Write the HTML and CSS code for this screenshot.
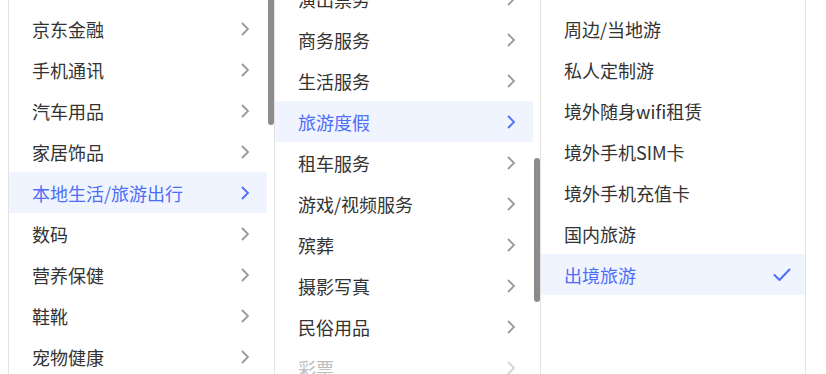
FILE: index.html
```html
<!DOCTYPE html>
<html lang="zh-CN">
<head>
    <meta charset="UTF-8">
    <title>类目选择</title>
    <link rel="stylesheet" href="styles.css">
</head>
<body>
    <!-- 三级类目级联面板 -->
    <div class="cascader">
        <!-- 一级类目 -->
        <div class="column">
            <ul class="menu">
                <li class="item"><span>京东金融</span><svg class="arrow" viewBox="0 0 16 16"><path d="M5 2 L11 8 L5 14"/></svg></li>
                <li class="item"><span>手机通讯</span><svg class="arrow" viewBox="0 0 16 16"><path d="M5 2 L11 8 L5 14"/></svg></li>
                <li class="item"><span>汽车用品</span><svg class="arrow" viewBox="0 0 16 16"><path d="M5 2 L11 8 L5 14"/></svg></li>
                <li class="item"><span>家居饰品</span><svg class="arrow" viewBox="0 0 16 16"><path d="M5 2 L11 8 L5 14"/></svg></li>
                <li class="item active"><span>本地生活/旅游出行</span><svg class="arrow" viewBox="0 0 16 16"><path d="M5 2 L11 8 L5 14"/></svg></li>
                <li class="item"><span>数码</span><svg class="arrow" viewBox="0 0 16 16"><path d="M5 2 L11 8 L5 14"/></svg></li>
                <li class="item"><span>营养保健</span><svg class="arrow" viewBox="0 0 16 16"><path d="M5 2 L11 8 L5 14"/></svg></li>
                <li class="item"><span>鞋靴</span><svg class="arrow" viewBox="0 0 16 16"><path d="M5 2 L11 8 L5 14"/></svg></li>
                <li class="item"><span>宠物健康</span><svg class="arrow" viewBox="0 0 16 16"><path d="M5 2 L11 8 L5 14"/></svg></li>
            </ul>
            <div class="thumb thumb-first"></div>
        </div>

        <!-- 二级类目 -->
        <div class="column">
            <ul class="menu scrolled">
                <li class="item"><span>演出票务</span><svg class="arrow" viewBox="0 0 16 16"><path d="M5 2 L11 8 L5 14"/></svg></li>
                <li class="item"><span>商务服务</span><svg class="arrow" viewBox="0 0 16 16"><path d="M5 2 L11 8 L5 14"/></svg></li>
                <li class="item"><span>生活服务</span><svg class="arrow" viewBox="0 0 16 16"><path d="M5 2 L11 8 L5 14"/></svg></li>
                <li class="item active"><span>旅游度假</span><svg class="arrow" viewBox="0 0 16 16"><path d="M5 2 L11 8 L5 14"/></svg></li>
                <li class="item"><span>租车服务</span><svg class="arrow" viewBox="0 0 16 16"><path d="M5 2 L11 8 L5 14"/></svg></li>
                <li class="item"><span>游戏/视频服务</span><svg class="arrow" viewBox="0 0 16 16"><path d="M5 2 L11 8 L5 14"/></svg></li>
                <li class="item"><span>殡葬</span><svg class="arrow" viewBox="0 0 16 16"><path d="M5 2 L11 8 L5 14"/></svg></li>
                <li class="item"><span>摄影写真</span><svg class="arrow" viewBox="0 0 16 16"><path d="M5 2 L11 8 L5 14"/></svg></li>
                <li class="item"><span>民俗用品</span><svg class="arrow" viewBox="0 0 16 16"><path d="M5 2 L11 8 L5 14"/></svg></li>
                <li class="item disabled"><span>彩票</span><svg class="arrow" viewBox="0 0 16 16"><path d="M5 2 L11 8 L5 14"/></svg></li>
            </ul>
            <div class="thumb thumb-second"></div>
        </div>

        <!-- 三级类目 -->
        <div class="column">
            <ul class="menu full">
                <li class="item"><span>周边/当地游</span></li>
                <li class="item"><span>私人定制游</span></li>
                <li class="item"><span>境外随身wifi租赁</span></li>
                <li class="item"><span>境外手机SIM卡</span></li>
                <li class="item"><span>境外手机充值卡</span></li>
                <li class="item"><span>国内旅游</span></li>
                <li class="item active"><span>出境旅游</span><svg class="check" viewBox="0 0 18 14"><path d="M1.5 7 L6.5 12 L16.5 1.5"/></svg></li>
            </ul>
        </div>
    </div>
</body>
</html>
```

FILE: styles.css
```css
/* Basic reset */
body, ul {
    margin: 0;
    padding: 0;
}

body {
    background-color: #fff;
    font-family: "Noto Sans CJK SC", "Noto Sans", sans-serif;
    padding-left: 8px;
    height: 374px;
    overflow: hidden;
}

/* Panel with three columns */
.cascader {
    display: grid;
    grid-template-columns: 266px 266px 265px;
    width: 798px;
    height: 374px;
    border-left: 1px solid #e3e3e3;
    overflow: hidden;
}

.column {
    position: relative;
    overflow: hidden;
    border-right: 1px solid #e3e3e3;
}

.menu {
    list-style: none;
    width: calc(100% - 7px); /* leave room for the scrollbar */
    padding-top: 8px;
}

.menu.full {
    width: 100%;
}

/* second column is scrolled down a little */
.menu.scrolled {
    margin-top: -30px;
}

.item {
    display: flex;
    align-items: center;
    justify-content: space-between;
    height: 41px;
    padding: 0 14px 0 23px;
    font-size: 18px;
    color: #333;
    white-space: nowrap;
}

.item.active {
    background-color: #f0f4ff;
    color: #4f6ef7;
}

.item.disabled {
    color: #bdbdbd;
}

.arrow {
    width: 16px;
    height: 16px;
    flex: none;
}

.arrow path {
    fill: none;
    stroke: #9a9a9a;
    stroke-width: 1.8;
}

.item.active .arrow path {
    stroke: #4f6ef7;
}

.item.disabled .arrow path {
    stroke: #d3d3d3;
}

.check {
    width: 18px;
    height: 14px;
    flex: none;
}

.check path {
    fill: none;
    stroke: #4f6ef7;
    stroke-width: 2;
    stroke-linecap: round;
    stroke-linejoin: round;
}

/* Scrollbar thumbs over the column edge */
.thumb {
    position: absolute;
    right: 0;
    width: 6px;
    border-radius: 3px;
    background-color: #8c8c8c;
}

.thumb-first {
    top: -6px;
    height: 131px;
}

.thumb-second {
    top: 158px;
    height: 144px;
}
```
